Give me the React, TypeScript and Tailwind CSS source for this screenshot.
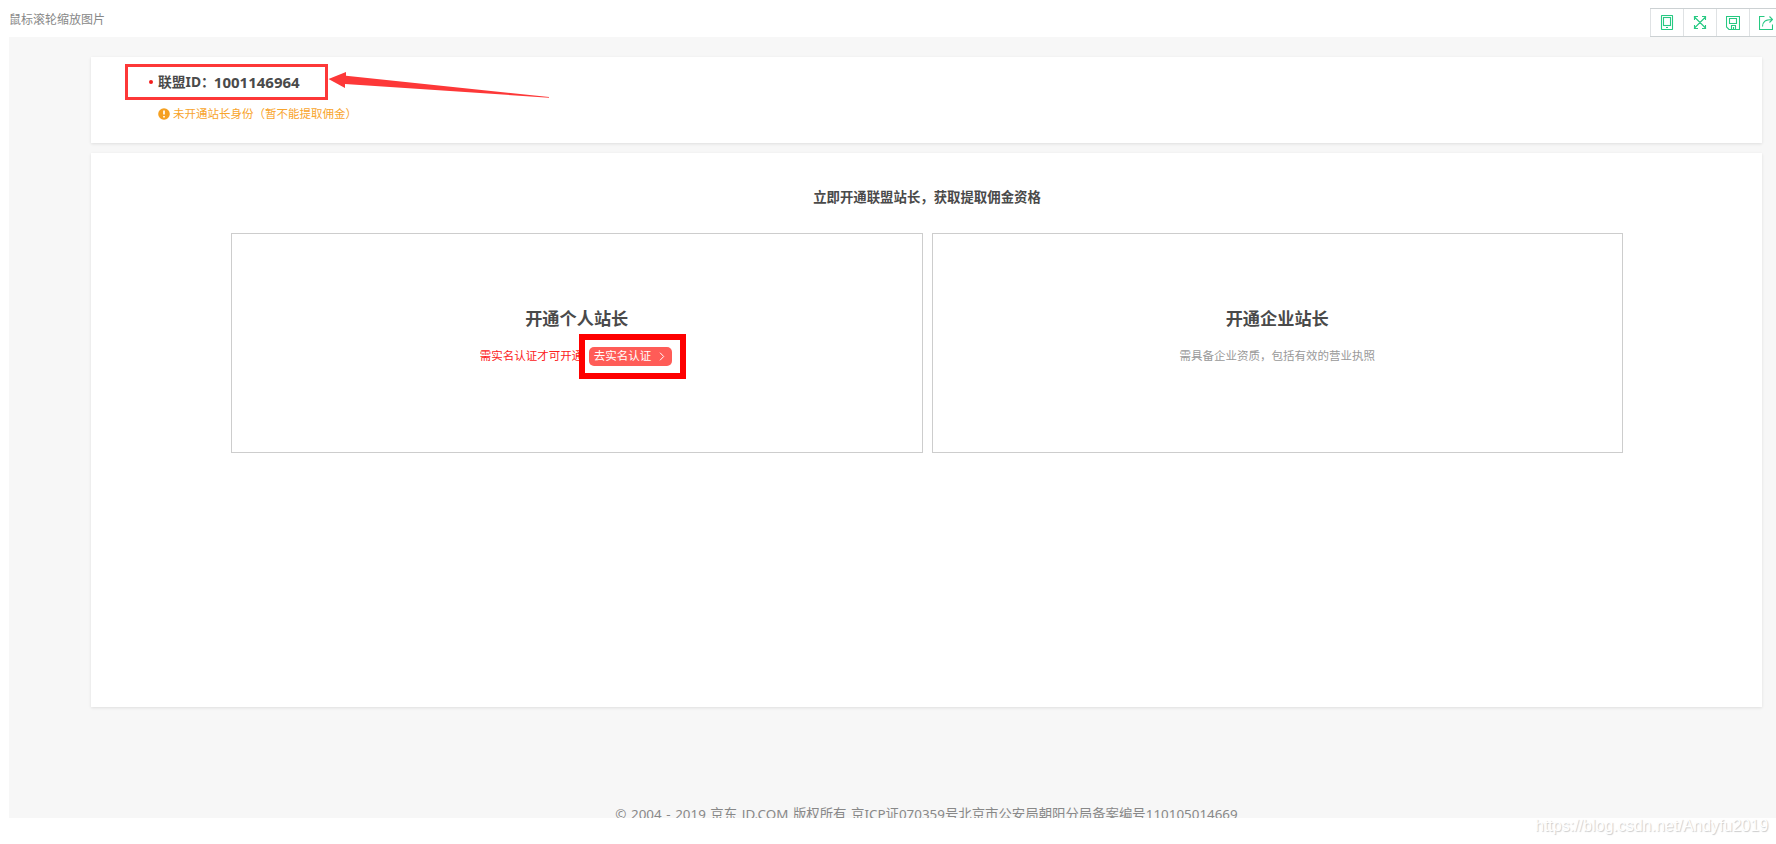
import type { ReactNode } from "react";

function Tool({ children }: { children: ReactNode }) {
  return (
    <button className="flex h-full w-[33px] shrink-0 items-center justify-center border-l border-[#dfe2e4] bg-white">
      <svg width="14" height="15" viewBox="0 0 14 15" fill="none" stroke="#27c982" strokeWidth="1.1">{children}</svg>
    </button>
  );
}

function Toolbar() {
  return (
    <div className="absolute top-2 left-[1650px] flex h-[29px] w-[126px] overflow-hidden border-y border-[#ccd1d3]">
      <Tool>
        <rect x="1.5" y="0.5" width="11" height="14" rx=".5" />
        <rect x="3.5" y="2.5" width="7" height="8" />
        <path d="M6 12.5h2" />
      </Tool>
      <Tool>
        <path d="M1 1.5l12 12M13 1.5l-12 12M1.5 5V1.5H5M9 1.5h3.5V5M1.5 10v3.5H5M9 13.5h3.5V10" />
      </Tool>
      <Tool>
        <path d="M.5 1.5h13v13H3L.5 12zM3.5 3.5h7v5h-7zM5.5 14v-3.5h4V14M7.5 12v2" />
      </Tool>
      <Tool>
        <path d="M5.5 1.5h-5v13h13v-5M3.5 11.5C3.5 7 6 4.5 13 4.5M10.5 1.5l3 3-3 3" />
      </Tool>
    </div>
  );
}

function AccountCard() {
  return (
    <section className="relative h-[86px] bg-white pl-[34px] shadow-[0_1px_3px_rgba(0,0,0,0.1)]">
      <div className="relative top-[7px] flex h-9 w-[203px] items-center border-[3px] border-[#fd3838] pl-[21px]">
        <span className="mr-[5px] size-1 rounded-full bg-[#f21d1d]" />
        <span className="-mr-px text-[13.8px] font-bold whitespace-nowrap text-[#4a4a4a]">联盟ID：</span>
        <span className="text-[15px] font-bold text-[#4a4a4a]">1001146964</span>
      </div>
      <svg className="absolute top-[14px] left-[237px]" width="222" height="30" viewBox="0 0 222 30">
        <path fill="#fd3838" d="M0.5 8L18 1v3.7L221 26v.7L17 13v4z" />
      </svg>
      <div className="flex items-center gap-[3px] pt-[12px] pl-[33px] text-[11.5px] leading-[18px] text-[#f8a42c]">
        <svg width="12" height="12" viewBox="0 0 12 12">
          <circle cx="6" cy="6" r="5.8" fill="#f5a021" />
          <path d="M6 2.6v4M6 8v1.5" stroke="#fff" strokeWidth="1.7" />
        </svg>
        <span>未开通站长身份（暂不能提取佣金）</span>
      </div>
    </section>
  );
}

function Option({ title, children }: { title: string; children: ReactNode }) {
  return (
    <div className="h-[220px] flex-1 border border-[#cdcdcd] pt-[72px] text-center">
      <h2 className="text-[17.2px] leading-[26px] font-bold text-[#4a4a4a]">{title}</h2>
      <div className="mt-3 flex h-6 items-center justify-center text-[11.5px] whitespace-nowrap">{children}</div>
    </div>
  );
}

export default function App() {
  return (
    <main className="relative h-[844px] w-[1776px] overflow-hidden bg-white pl-[9px] font-['Noto_Sans','Noto_Sans_CJK_SC',sans-serif]">
      <header className="h-[37px] pt-[11px] text-[12px] leading-[18px] text-[#888]">鼠标滚轮缩放图片</header>
      <div className="h-[781px] overflow-hidden bg-[#f7f7f7] pt-5 pr-[14px] pl-[82px]">
        <AccountCard />
        <section className="mt-[10px] h-[554px] bg-white pt-[34px] pr-[139px] pl-[140px] shadow-[0_1px_3px_rgba(0,0,0,0.1)]">
          <p className="text-center text-[13.4px] leading-5 font-bold text-[#4a4a4a]">立即开通联盟站长，获取提取佣金资格</p>
          <div className="mt-[26px] flex gap-[9px]">
            <Option title="开通个人站长">
              <span className="ml-[11px] w-[99px] overflow-hidden text-left text-[#fc2020]">需实名认证才可开通</span>
              <span className="-mr-[1px] flex h-[45px] w-[107px] shrink-0 items-center border-[6px] border-[#fe0000] bg-white pl-1">
                <button className="flex h-[19px] w-[83px] items-center rounded-[5px] bg-[#ff5c57] pl-[5px] text-white">
                  去实名认证
                  <svg className="ml-2" width="6" height="9" viewBox="0 0 6 9" fill="none" stroke="currentColor"><path d="M1 .7l3.7 3.8L1 8.3" /></svg>
                </button>
              </span>
            </Option>
            <Option title="开通企业站长">
              <span className="text-[#999]">需具备企业资质，包括有效的营业执照</span>
            </Option>
          </div>
        </section>
        <footer className="mt-[97px] text-center text-[13.4px] leading-5 whitespace-nowrap text-[#888] [word-spacing:1.1px]">
          © 2004 - 2019 京东 JD.COM 版权所有 京ICP证070359号北京市公安局朝阳分局备案编号110105014669
        </footer>
      </div>
      <Toolbar />
      <span className="absolute top-[815px] left-[1535px] font-['Liberation_Sans',sans-serif] text-[16px] leading-[21px] whitespace-nowrap text-white [text-shadow:1px_1px_1px_#ccc]">https://blog.csdn.net/Andyfu2019</span>
    </main>
  );
}
